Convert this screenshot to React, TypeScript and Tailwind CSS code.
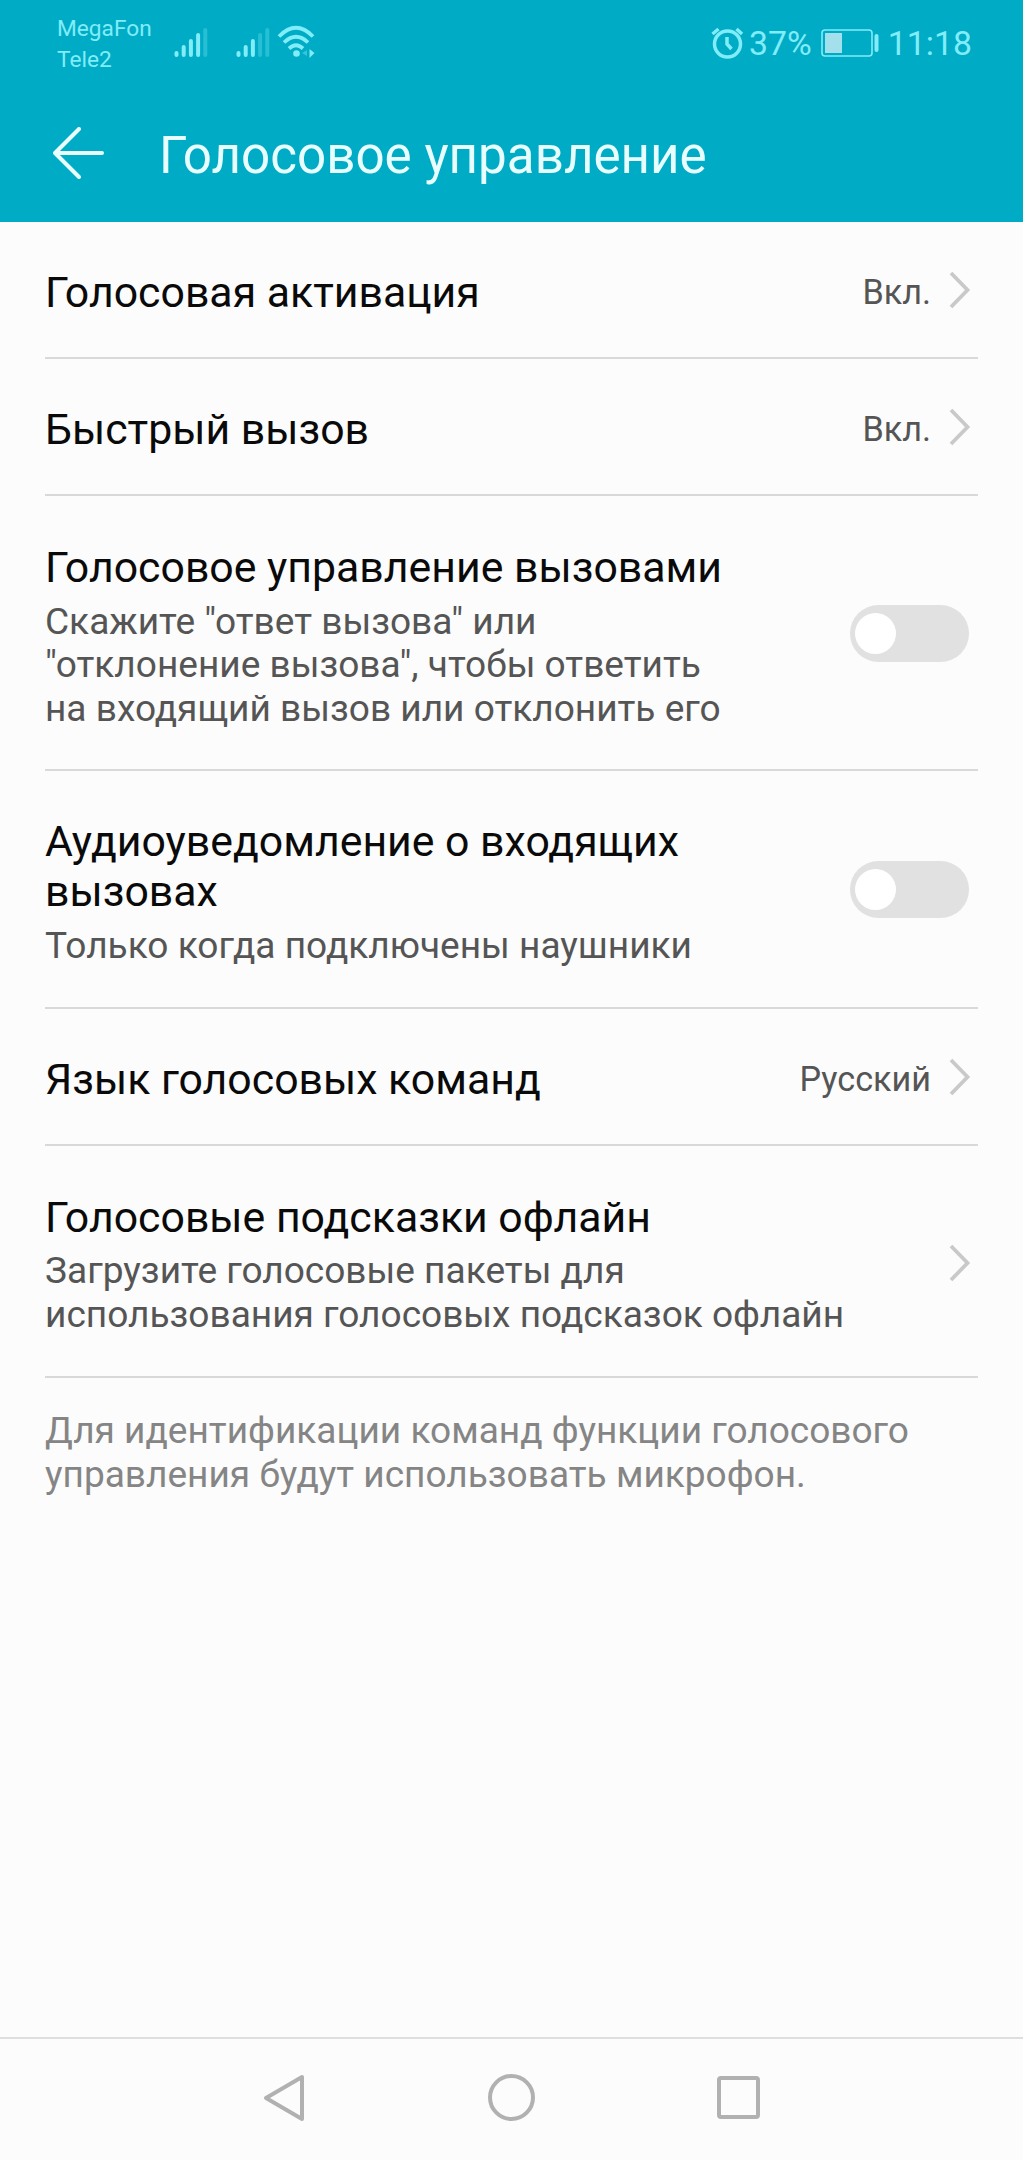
import type { ReactNode } from "react";

function Chevron() {
  return (
    <svg className="block h-[38px] w-[22px] shrink-0" viewBox="0 0 22 38" fill="none" stroke="#c9c9c9" strokeWidth="3.800">
      <path d="M2 2 18.500 19 2 36" />
    </svg>
  );
}

function Toggle() {
  return (
    <div className="flex h-[57px] w-[119px] shrink-0 items-center rounded-full bg-[#e1e1e1] pl-[5px]">
      <div className="size-[41px] rounded-full bg-white" />
    </div>
  );
}

function Row({ h, titles, subs = [], children }: { h: string; titles: string[]; subs?: string[]; children?: ReactNode }) {
  return (
    <div className={`${h} flex items-start justify-between border-b-2 border-[#d9d9d9]`}>
      <div className="whitespace-nowrap">
        <div className="text-[42.8px] leading-[50px] text-[#0a0a0a]">
          {titles.map((t) => (
            <div key={t}>{t}</div>
          ))}
        </div>
        <div className="mt-[7.6px] text-[37.05px] leading-[43.7px] text-[#555555]">
          {subs.map((t) => (
            <div key={t}>{t}</div>
          ))}
        </div>
      </div>
      {children}
    </div>
  );
}

function Value({ text }: { text: string }) {
  return (
    <div className="flex items-start pt-[4px] pr-[7px]">
      <span className="mr-[18px] text-[34.2px] leading-[43px] text-[#555555]">{text}</span>
      <Chevron />
    </div>
  );
}

function SignalBars({ active }: { active: number }) {
  const tops = [20, 14, 8, 2, -3];
  return (
    <svg className="h-[34px] w-[34px] shrink-0" viewBox="0 -4 34 34" stroke="#80edf8" strokeWidth="4" strokeLinecap="round">
      {tops.map((top, i) => (
        <path key={top} d={`M${2.5 + i * 7.2} ${top + 3}V25`} opacity={i < active ? 1 : 0.3} />
      ))}
    </svg>
  );
}

export default function App() {
  return (
    <div className="flex h-[2160px] w-[1023px] flex-col overflow-hidden bg-[#fcfcfc] font-['Roboto',sans-serif]">
      <header className="h-[221.5px] shrink-0 bg-[#00abc5]">
        <div className="flex h-[88px] items-start text-[#80edf8]">
          <div className="ml-[57px] w-[117px] shrink-0 pt-[13px] text-[22.7px] leading-[31px]">
            <div>MegaFon</div>
            <div>Tele2</div>
          </div>
          <div className="flex pt-[26px]">
            <SignalBars active={4} />
            <div className="w-[28px]" />
            <SignalBars active={3} />
          </div>
          <svg className="mt-[25px] ml-[7px] h-[34px] w-[40px] shrink-0" viewBox="0 0 40 34" fill="none" stroke="#80edf8" strokeWidth="3.800">
            <path d="M2 11.500Q19 -6 36 11.500M7 17.500Q19 6 31 17.500M12 23.500Q19 17 26 23.500" />
            <circle cx="19.500" cy="28.500" r="3.300" fill="#80edf8" stroke="none" />
            <path d="M30 25v6l-5-3z" fill="#80edf8" stroke="none" opacity=".4" />
            <path d="M32.500 24v9l5-5z" fill="#80edf8" stroke="none" />
          </svg>
          <div className="ml-auto flex items-start pr-[51px]">
            <svg className="mt-[26px] h-[34px] w-[32px]" viewBox="0 0 32 34" fill="none" stroke="#80edf8" strokeWidth="3.500">
              <circle cx="16.500" cy="18" r="13" />
              <path d="M16 11v7l4.500 5M1.500 8 7.500 3M31 8 25.500 3" />
            </svg>
            <span className="ml-[6px] pt-[23px] text-[33.8px] leading-[42px]">37%</span>
            <svg className="mt-[29px] ml-[9px] h-[28px] w-[58px]" viewBox="0 0 58 28" fill="none" stroke="#80edf8">
              <rect x="1" y="1" width="50" height="26" rx="3" strokeWidth="1.600" />
              <rect x="4" y="4" width="17" height="20" fill="#a4e0ec" stroke="none" />
              <path d="M55.500 7v14" strokeWidth="4" strokeLinecap="round" />
            </svg>
            <span className="ml-[9px] pt-[23px] text-[33.8px] leading-[42px]">11:18</span>
          </div>
        </div>
        <div className="flex items-start pl-[53px] text-[#e8ffff]">
          <svg className="mt-[39px] h-[52px] w-[52px]" viewBox="0 0 52 52" fill="none" stroke="currentColor" strokeWidth="4" strokeLinecap="round" strokeLinejoin="round">
            <path d="M26 2 2 26 26 50M2 26H49" />
          </svg>
          <h1 className="ml-[54px] pt-[38px] text-[51.15px] leading-[60px]">Голосовое управление</h1>
        </div>
      </header>
      <main className="grow px-[45px]">
        <Row h="h-[137.5px] pt-[45.5px]" titles={["Голосовая активация"]}><Value text="Вкл." /></Row>
        <Row h="h-[137px] pt-[45px]" titles={["Быстрый вызов"]}><Value text="Вкл." /></Row>
        <Row
          h="h-[275px] pt-[46px]"
          titles={["Голосовое управление вызовами"]}
          subs={['Скажите "ответ вызова" или', '"отклонение вызова", чтобы ответить', "на входящий вызов или отклонить его"]}
        >
          <div className="pt-[63px] pr-[9px]"><Toggle /></div>
        </Row>
        <Row h="h-[238px] pt-[45px]" titles={["Аудиоуведомление о входящих", "вызовах"]} subs={["Только когда подключены наушники"]}>
          <div className="pt-[45px] pr-[9px]"><Toggle /></div>
        </Row>
        <Row h="h-[137px] pt-[45px]" titles={["Язык голосовых команд"]}><Value text="Русский" /></Row>
        <Row
          h="h-[232px] pt-[45.5px]"
          titles={["Голосовые подсказки офлайн"]}
          subs={["Загрузите голосовые пакеты для", "использования голосовых подсказок офлайн"]}
        >
          <div className="pt-[52px] pr-[7px]"><Chevron /></div>
        </Row>
        <p className="pt-[31px] text-[37.05px] leading-[43.7px] whitespace-nowrap text-[#858585]">
          Для идентификации команд функции голосового<br />
          управления будут использовать микрофон.
        </p>
      </main>
      <nav className="flex h-[123px] shrink-0 items-start justify-between border-t-2 border-[#dedede] pt-[35px] pr-[263px] pl-[260px]">
        <svg className="-mt-px h-[50px] w-[48px]" viewBox="0 0 48 50" fill="none" stroke="#b1b1b1" strokeWidth="4" strokeLinejoin="round">
          <path d="M6 25 42 4V46Z" />
        </svg>
        <div className="-ml-[3px] size-[47px] rounded-full border-4 border-[#b1b1b1]" />
        <div className="mt-[2px] size-[43px] rounded-[4px] border-4 border-[#b1b1b1]" />
      </nav>
    </div>
  );
}
